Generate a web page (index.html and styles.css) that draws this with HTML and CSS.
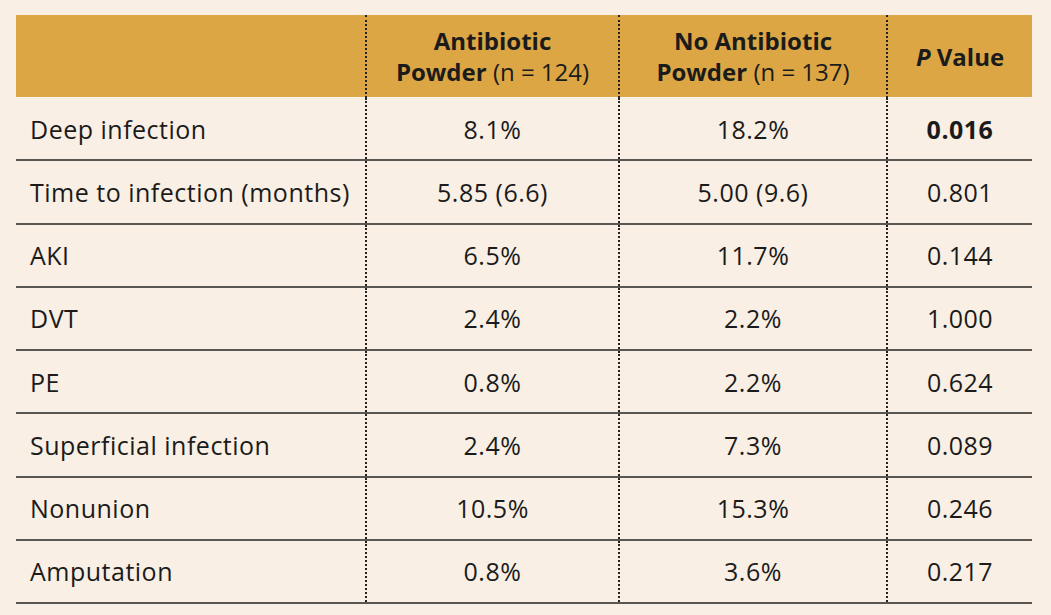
FILE: index.html
```html
<!DOCTYPE html>
<html>
<head>
<meta charset="utf-8">
<link rel="stylesheet" href="styles.css">
</head>
<body>
<table class="results">
  <colgroup>
    <col class="c-label">
    <col class="c-a">
    <col class="c-b">
    <col class="c-p">
  </colgroup>
  <thead>
    <tr>
      <th class="label"></th>
      <th><b>Antibiotic<br>Powder</b> <span class="n">(n = 124)</span></th>
      <th><b>No Antibiotic<br>Powder</b> <span class="n">(n = 137)</span></th>
      <th><b><i>P</i> Value</b></th>
    </tr>
  </thead>
  <tbody>
    <tr><td class="label">Deep infection</td><td>8.1%</td><td>18.2%</td><td><b>0.016</b></td></tr>
    <tr><td class="label">Time to infection (months)</td><td>5.85 (6.6)</td><td>5.00 (9.6)</td><td>0.801</td></tr>
    <tr><td class="label">AKI</td><td>6.5%</td><td>11.7%</td><td>0.144</td></tr>
    <tr><td class="label">DVT</td><td>2.4%</td><td>2.2%</td><td>1.000</td></tr>
    <tr><td class="label">PE</td><td>0.8%</td><td>2.2%</td><td>0.624</td></tr>
    <tr><td class="label">Superficial infection</td><td>2.4%</td><td>7.3%</td><td>0.089</td></tr>
    <tr><td class="label">Nonunion</td><td>10.5%</td><td>15.3%</td><td>0.246</td></tr>
    <tr><td class="label">Amputation</td><td>0.8%</td><td>3.6%</td><td>0.217</td></tr>
  </tbody>
</table>
</body>
</html>
```
FILE: styles.css
```css
html, body {
  margin: 0;
  padding: 0;
  background: #f9efe4;
}
body {
  padding: 15px 19px 0 16px;
  font-family: "Open Sans", "Liberation Sans", sans-serif;
  color: #1b1b1b;
}
.results {
  width: 1016px;
  border-collapse: collapse;
  table-layout: fixed;
  font-size: 25px;
  letter-spacing: 0.5px;
}
.c-label { width: 350px; }
.c-a { width: 253px; }
.c-b { width: 268px; }
.c-p { width: 145px; }

.results th {
  background: #dba643;
  height: 82px;
  padding: 0;
  font-size: 24px;
  letter-spacing: 0;
  font-weight: 400;
  line-height: 31px;
  text-align: center;
  border-left: 2px dotted #222;
  border-bottom: 1px solid #fbf4ea;
}
.results th b { font-weight: 700; }
.results th.label { border-left: none; }

.results td {
  height: 61.25px;
  padding: 0;
  text-align: center;
  border-left: 2px dotted #222;
  border-bottom: 2px solid #5a5753;
}
.results td.label {
  text-align: left;
  padding-left: 14px;
  border-left: none;
}
.results td b { font-weight: 700; }
```
